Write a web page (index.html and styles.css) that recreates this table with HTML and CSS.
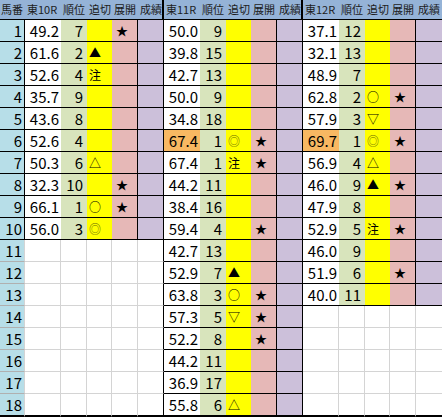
FILE: index.html
```html
<!DOCTYPE html>
<html lang="ja">
<head>
<meta charset="utf-8">
<link rel="stylesheet" href="styles.css">
</head>
<body>
<div class="sheet">
  <div class="row hdr">
    <div class="h first">馬番</div><div class="h">東10R</div><div class="h">順位</div><div class="h">追切</div><div class="h">展開</div><div class="h hb">成績</div>
    <div class="h">東11R</div><div class="h">順位</div><div class="h">追切</div><div class="h">展開</div><div class="h hb">成績</div>
    <div class="h">東12R</div><div class="h">順位</div><div class="h">追切</div><div class="h">展開</div><div class="h">成績</div>
  </div>
  <div class="row">
    <div class="n">1</div><div class="r">49.2</div><div class="j">7</div><div class="o"></div><div class="t">★</div><div class="s"></div>
    <div class="r">50.0</div><div class="j">9</div><div class="o"></div><div class="t"></div><div class="s"></div>
    <div class="r">37.1</div><div class="j">12</div><div class="o"></div><div class="t"></div><div class="s end"></div>
  </div>
  <div class="row">
    <div class="n">2</div><div class="r">61.6</div><div class="j">2</div><div class="o">▲</div><div class="t"></div><div class="s"></div>
    <div class="r">39.8</div><div class="j">15</div><div class="o"></div><div class="t"></div><div class="s"></div>
    <div class="r">32.1</div><div class="j">13</div><div class="o"></div><div class="t"></div><div class="s end"></div>
  </div>
  <div class="row">
    <div class="n">3</div><div class="r">52.6</div><div class="j">4</div><div class="o">注</div><div class="t"></div><div class="s"></div>
    <div class="r">42.7</div><div class="j">13</div><div class="o"></div><div class="t"></div><div class="s"></div>
    <div class="r">48.9</div><div class="j">7</div><div class="o"></div><div class="t"></div><div class="s end"></div>
  </div>
  <div class="row">
    <div class="n">4</div><div class="r">35.7</div><div class="j">9</div><div class="o"></div><div class="t"></div><div class="s"></div>
    <div class="r">50.0</div><div class="j">9</div><div class="o"></div><div class="t"></div><div class="s"></div>
    <div class="r">62.8</div><div class="j">2</div><div class="o">○</div><div class="t">★</div><div class="s end"></div>
  </div>
  <div class="row">
    <div class="n">5</div><div class="r">43.6</div><div class="j">8</div><div class="o"></div><div class="t"></div><div class="s"></div>
    <div class="r">34.8</div><div class="j">18</div><div class="o"></div><div class="t"></div><div class="s"></div>
    <div class="r">57.9</div><div class="j">3</div><div class="o">▽</div><div class="t"></div><div class="s end"></div>
  </div>
  <div class="row">
    <div class="n">6</div><div class="r">52.6</div><div class="j">4</div><div class="o"></div><div class="t"></div><div class="s"></div>
    <div class="r x">67.4</div><div class="j">1</div><div class="o dm">◎</div><div class="t">★</div><div class="s"></div>
    <div class="r x">69.7</div><div class="j">1</div><div class="o dm">◎</div><div class="t">★</div><div class="s end"></div>
  </div>
  <div class="row">
    <div class="n">7</div><div class="r">50.3</div><div class="j">6</div><div class="o">△</div><div class="t"></div><div class="s"></div>
    <div class="r">67.4</div><div class="j">1</div><div class="o">注</div><div class="t">★</div><div class="s"></div>
    <div class="r">56.9</div><div class="j">4</div><div class="o">△</div><div class="t"></div><div class="s end"></div>
  </div>
  <div class="row">
    <div class="n">8</div><div class="r">32.3</div><div class="j">10</div><div class="o"></div><div class="t">★</div><div class="s"></div>
    <div class="r">44.2</div><div class="j">11</div><div class="o"></div><div class="t"></div><div class="s"></div>
    <div class="r">46.0</div><div class="j">9</div><div class="o">▲</div><div class="t">★</div><div class="s end"></div>
  </div>
  <div class="row">
    <div class="n">9</div><div class="r">66.1</div><div class="j">1</div><div class="o">○</div><div class="t">★</div><div class="s"></div>
    <div class="r">38.4</div><div class="j">16</div><div class="o"></div><div class="t"></div><div class="s"></div>
    <div class="r">47.9</div><div class="j">8</div><div class="o"></div><div class="t"></div><div class="s end"></div>
  </div>
  <div class="row">
    <div class="n">10</div><div class="r">56.0</div><div class="j">3</div><div class="o dm">◎</div><div class="t"></div><div class="s"></div>
    <div class="r">59.4</div><div class="j">4</div><div class="o"></div><div class="t">★</div><div class="s"></div>
    <div class="r">52.9</div><div class="j">5</div><div class="o">注</div><div class="t">★</div><div class="s end"></div>
  </div>
  <div class="row">
    <div class="n ng">11</div><div class="e"></div><div class="e"></div><div class="e"></div><div class="e"></div><div class="e eb"></div>
    <div class="r">42.7</div><div class="j">13</div><div class="o"></div><div class="t"></div><div class="s"></div>
    <div class="r">46.0</div><div class="j">9</div><div class="o"></div><div class="t"></div><div class="s end"></div>
  </div>
  <div class="row">
    <div class="n ng">12</div><div class="e"></div><div class="e"></div><div class="e"></div><div class="e"></div><div class="e eb"></div>
    <div class="r">52.9</div><div class="j">7</div><div class="o">▲</div><div class="t"></div><div class="s"></div>
    <div class="r">51.9</div><div class="j">6</div><div class="o"></div><div class="t">★</div><div class="s end"></div>
  </div>
  <div class="row">
    <div class="n ng">13</div><div class="e"></div><div class="e"></div><div class="e"></div><div class="e"></div><div class="e eb"></div>
    <div class="r">63.8</div><div class="j">3</div><div class="o">○</div><div class="t">★</div><div class="s"></div>
    <div class="r">40.0</div><div class="j">11</div><div class="o"></div><div class="t"></div><div class="s end"></div>
  </div>
  <div class="row">
    <div class="n ng">14</div><div class="e"></div><div class="e"></div><div class="e"></div><div class="e"></div><div class="e eb"></div>
    <div class="r">57.3</div><div class="j">5</div><div class="o">▽</div><div class="t">★</div><div class="s"></div>
    <div class="e"></div><div class="e"></div><div class="e"></div><div class="e"></div><div class="e end"></div>
  </div>
  <div class="row">
    <div class="n ng">15</div><div class="e"></div><div class="e"></div><div class="e"></div><div class="e"></div><div class="e eb"></div>
    <div class="r">52.2</div><div class="j">8</div><div class="o"></div><div class="t">★</div><div class="s"></div>
    <div class="e"></div><div class="e"></div><div class="e"></div><div class="e"></div><div class="e end"></div>
  </div>
  <div class="row">
    <div class="n ng">16</div><div class="e"></div><div class="e"></div><div class="e"></div><div class="e"></div><div class="e eb"></div>
    <div class="r">44.2</div><div class="j">11</div><div class="o"></div><div class="t"></div><div class="s"></div>
    <div class="e"></div><div class="e"></div><div class="e"></div><div class="e"></div><div class="e end"></div>
  </div>
  <div class="row">
    <div class="n ng">17</div><div class="e"></div><div class="e"></div><div class="e"></div><div class="e"></div><div class="e eb"></div>
    <div class="r">36.9</div><div class="j">17</div><div class="o"></div><div class="t"></div><div class="s"></div>
    <div class="e"></div><div class="e"></div><div class="e"></div><div class="e"></div><div class="e end"></div>
  </div>
  <div class="row last">
    <div class="n ng">18</div><div class="e"></div><div class="e"></div><div class="e"></div><div class="e"></div><div class="e eb"></div>
    <div class="r">55.8</div><div class="j">6</div><div class="o">△</div><div class="t"></div><div class="s"></div>
    <div class="e"></div><div class="e"></div><div class="e"></div><div class="e"></div><div class="e end"></div>
  </div>
</div>
</body>
</html>
```
FILE: styles.css
```css
html, body {
  margin: 0;
  padding: 0;
  background: #ffffff;
}

.sheet {
  width: 442px;
  font-family: "Noto Sans CJK JP", "Liberation Sans", sans-serif;
  color: #000;
}

.row {
  display: grid;
  grid-template-columns: 25px 36px 26px 25px 26px 26px 36px 26px 25px 26px 26px 36px 26px 25px 26px 26px;
  height: 22px;
}

.row.hdr {
  height: 20px;
  background: #95b3d7;
}

.row.last {
  height: 23px;
}

.row > div {
  box-sizing: border-box;
  border-bottom: 1px solid #000;
  display: flex;
  align-items: center;
  overflow: hidden;
  white-space: nowrap;
  line-height: 1;
}

.row.last > div {
  border-bottom-width: 2px;
  border-bottom-color: #000;
}

.h {
  font-size: 11px;
  padding-left: 2px;
  color: #1c1c1c;
}

.h.first {
  padding-left: 1px;
}

.h.hb {
  border-right: 2px solid #000;
}

.n {
  background: #b7dee8;
  justify-content: flex-end;
  padding-right: 2px;
  font-size: 15px;
  border-right: 1px solid #000;
}

.n.ng {
  border-right-color: #d4d4d4;
}

.row:not(.last) > .n.ng {
  border-bottom-color: #b0b0b0;
}

.r {
  background: #ffffff;
  justify-content: flex-end;
  padding-right: 2px;
  font-size: 15px;
}

.r.x {
  background: #f8b862;
}

.j {
  background: #d8e4bc;
  justify-content: flex-end;
  padding-right: 4px;
  font-size: 15px;
}

.o {
  background: #ffff00;
  font-size: 12px;
  padding-left: 2px;
}

.o.dm {
  color: #6b6b00;
}

.t {
  background: #e6b8b7;
  font-size: 12px;
  padding-left: 4px;
  border-right: 1px solid #000;
}

.s {
  background: #ccc0da;
  border-right: 1px solid #000;
}

.s.end {
  border-right: 0;
}

.row:not(.last) > .e {
  border-bottom-color: #d4d4d4;
}

.e {
  background: #ffffff;
  border-right: 1px solid #d4d4d4;
}

.e.eb {
  border-right-color: #000;
}

.e.end {
  border-right: 0;
}
```
